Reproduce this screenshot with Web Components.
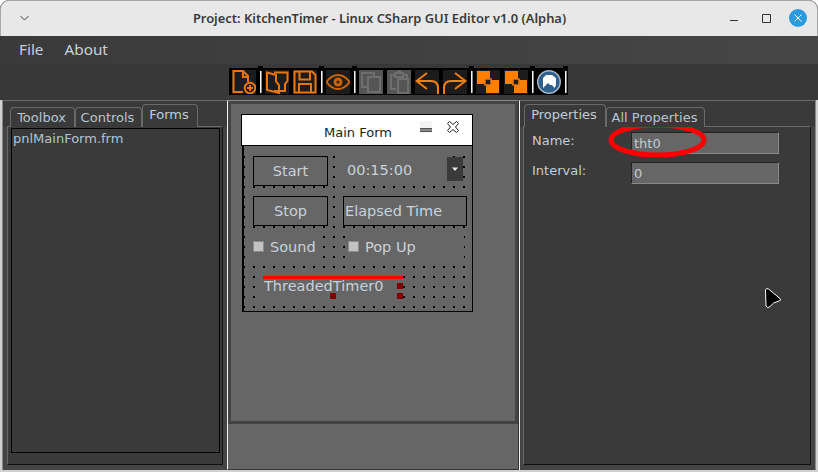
<!DOCTYPE html>
<html>
<head>
<meta charset="utf-8">
<title>KitchenTimer</title>
<style>
  html, body { margin: 0; padding: 0; background: #fff; }
  body { width: 818px; height: 472px; overflow: hidden; font-family: "DejaVu Sans", sans-serif; }
</style>
</head>
<body>

<app-window>
  <title-bar>Project: KitchenTimer - Linux CSharp GUI Editor v1.0 (Alpha)</title-bar>
  <menu-bar><span>File</span><span>About</span></menu-bar>
  <tool-bar>
    <tool-btn><svg viewBox="0 0 24 24"><path d="M11 22H1.500V1H11l5 5v6M11 1v6h5"/><circle cx="18" cy="18" r="5.300"/><path d="M18 15v6M15 18h6"/></svg></tool-btn>
    <tool-sep></tool-sep>
    <tool-btn><svg viewBox="0 0 24 24"><path d="M9 2.500H22.500V11L20 14V21H9M2 2.500L11 5V11.500L14 15V23L2 20Z"/></svg></tool-btn>
    <tool-btn><svg viewBox="0 0 24 24"><path d="M1.500 1.500H19L22.500 5V22.500H1.500ZM6.500 2V9.500H17V2M6 22V14H18V22"/></svg></tool-btn>
    <tool-sep></tool-sep>
    <tool-btn><svg viewBox="0 0 24 24"><path stroke="#c86408" d="M.5 12C4 7 8 5 12 5s8 2 11.500 7C20 17 16 19 12 19S4 17 .5 12Z"/><circle cx="12" cy="12" r="4.500" fill="#c86408" stroke="none"/><circle cx="12" cy="12" r="1.500" fill="#2a1a0a" stroke="none"/></svg></tool-btn>
    <tool-sep></tool-sep>
    <tool-btn off><svg viewBox="0 0 24 24"><path d="M9 17H3V3H15V7M9 7H21V22H9Z"/></svg></tool-btn>
    <tool-btn off><svg viewBox="0 0 24 24"><path d="M9 19H4V5H8M16 5H20V8M8 3H11V1.500H13V3H16V7H8ZM11 9H21V23H11Z"/></svg></tool-btn>
    <tool-btn><svg viewBox="0 0 24 24"><path stroke="#f08010" d="M12 3L1.500 11L12 19M2 11H16Q23 11 23 18V24"/></svg></tool-btn>
    <tool-btn><svg viewBox="0 0 24 24"><path stroke="#f08010" d="M12 3L22.500 11L12 19M22 11H8Q1 11 1 18V24"/></svg></tool-btn>
    <tool-sep></tool-sep>
    <tool-btn><svg viewBox="0 0 24 24"><path fill="#ff8000" stroke="none" d="M1 1H14V9H9V14H1ZM10 15H15V10H23V23H10Z"/><path stroke-width="1.500" d="M9 9H15V15H9Z"/></svg></tool-btn>
    <tool-btn><svg viewBox="0 0 24 24"><path fill="#ff8000" stroke="none" d="M1 1H14V9H9V14H1ZM10 15H15V10H23V23H10Z"/><path stroke-width="1.500" d="M9 9H15V15H9Z"/></svg></tool-btn>
    <tool-sep></tool-sep>
    <tool-btn logo><svg viewBox="0 0 24 24"><circle cx="12" cy="12" r="11.300" fill="#2f5f8c" stroke="#a9b8c6" stroke-width="1.400"/><path fill="#fff" stroke="none" d="M6 18V8L9 5H15L19 8V15L17.500 18L15 15H13L11 13L9 15Z"/></svg></tool-btn>
    <tool-sep></tool-sep>
  </tool-bar>
  <work-area>
    <tab-pane slot="left" tabs="Toolbox:65,Controls:67,Forms:56" active="2" list style="--pad-l:4px;--tab-indent:3px">
      <div style="padding-left:1px">pnlMainForm.frm</div>
    </tab-pane>
    <form-canvas slot="center"></form-canvas>
    <tab-pane slot="right" tabs="Properties:82,All Properties:99" active="0" style="--pad-l:3px;--tab-indent:1px">
      <prop-row label="Name:" value="tht0"></prop-row>
      <prop-row label="Interval:" value="0"></prop-row>
    </tab-pane>
  </work-area>
  <mark-overlay></mark-overlay>
</app-window>

<script>
// App shell
class AppWindow extends HTMLElement {
  constructor() {
    super();
    this.attachShadow({ mode: "open" });
    this.shadowRoot.innerHTML = `
      <style>
        :host {
          display: flex;
          flex-direction: column;
          position: relative;
          width: 818px;
          height: 472px;
          box-sizing: border-box;
          overflow: hidden;
          border-radius: 9px 9px 0 0;
          background: #3a3a3a;
          color: #c3ccd4;
          font: 13px "DejaVu Sans", sans-serif;
        }
      </style>
      <slot></slot>
    `;
  }
}

class TitleBar extends HTMLElement {
  constructor() {
    super();
    this.attachShadow({ mode: "open" });
    this.shadowRoot.innerHTML = `
      <style>
        :host {
          display: flex;
          align-items: center;
          flex: 0 0 36px;
          box-sizing: border-box;
          padding: 0 10px 1px 19px;
          background: #e8e8e8;
          border-top: 1px solid #a8a8a8;
          border-left: 1px solid #a8a8a8;
          border-right: 1px solid #a8a8a8;
          border-radius: 9px 9px 0 0;
          color: #3a3a3a;
        }
        .chev { width: 9px; height: 6px; }
        .title {
          flex: 1;
          text-align: center;
          font: 600 12.900px "Noto Sans", sans-serif;
          padding-left: 1px;
        }
        .btns { display: flex; align-items: center; gap: 16px; }
        .btns svg { display: block; }
      </style>
      <svg class="chev" viewBox="0 0 9 6" fill="none" stroke="#444" stroke-width="1"><path d="M.5 1L4.500 5L8.500 1"/></svg>
      <div class="title"><slot></slot></div>
      <div class="btns">
        <svg width="10" height="10" viewBox="0 0 10 10"><path d="M1 7.500H9" stroke="#333" stroke-width="1"/></svg>
        <svg width="12" height="12" viewBox="0 0 12 12" style="margin:0 1px 0 5px"><path d="M2.500 2.500H10.500V10.500H2.500Z" fill="none" stroke="#333"/></svg>
        <svg width="18" height="18" viewBox="0 0 18 18"><circle cx="9" cy="9" r="9" fill="#2a9ae0"/><path d="M5.500 5.500L12.500 12.500M12.500 5.500L5.500 12.500" stroke="#fff" stroke-width="1"/></svg>
      </div>
    `;
  }
}

class MenuBar extends HTMLElement {
  constructor() {
    super();
    this.attachShadow({ mode: "open" });
    this.shadowRoot.innerHTML = `
      <style>
        :host {
          display: flex;
          align-items: center;
          gap: 21px;
          flex: 0 0 28px;
          box-sizing: border-box;
          padding: 0 0 2px 19px;
          background: linear-gradient(90deg, #3a3a3a, #464646);
          color: #c5d0da;
          font: 15.300px "Noto Sans", sans-serif;
        }
      </style>
      <slot></slot>
    `;
  }
}

// Toolbar with its icon buttons
class ToolBar extends HTMLElement {
  constructor() {
    super();
    this.attachShadow({ mode: "open" });
    this.shadowRoot.innerHTML = `
      <style>
        :host {
          display: flex;
          flex: 0 0 36px;
          box-sizing: border-box;
          padding-top: 4px;
          padding-left: 229px;
          background: #383838;
        }
        .band {
          display: flex;
          align-items: flex-start;
          height: 27px;
          padding-left: 1px;
          background: #000;
        }
      </style>
      <div class="band"><slot></slot></div>
    `;
  }
}

class ToolBtn extends HTMLElement {
  constructor() {
    super();
    this.attachShadow({ mode: "open" });
    this.shadowRoot.innerHTML = `
      <style>
        :host {
          display: block;
          width: 24px;
          height: 24px;
          margin: 2px 2px 0;
          background: #1c1c1c;
        }
        :host([off]) { background: #555; }
        :host([logo]) { background: transparent; }
        ::slotted(svg) {
          display: block;
          width: 24px;
          height: 24px;
          fill: none;
          stroke: #e8760c;
          stroke-width: 2;
        }
        :host([off]) ::slotted(svg) { stroke: #6e6e6e; }
      </style>
      <slot></slot>
    `;
  }
}

class ToolSep extends HTMLElement {
  constructor() {
    super();
    this.attachShadow({ mode: "open" });
    this.shadowRoot.innerHTML = `
      <style>
        :host {
          display: flex;
          justify-content: center;
          width: 5px;
          height: 29px;
          margin-top: -2px;
          box-sizing: border-box;
          padding: 5px 0 2px;
          background: #000;
        }
        i { display: block; width: 1px; background: #f4f4f4; border-right: 1px solid #888; }
      </style>
      <i></i>
    `;
  }
}

// Three docked columns
class WorkArea extends HTMLElement {
  constructor() {
    super();
    this.attachShadow({ mode: "open" });
    this.shadowRoot.innerHTML = `
      <style>
        :host {
          display: grid;
          grid-template-columns: 225px 292px 1fr;
          flex: 1;
          min-height: 0;
          box-sizing: border-box;
          padding: 0 2px 2px 2px;
          background: #d0d0d0;
        }
        .col { display: flex; min-width: 0; min-height: 0; }
        .left { border-top: 1px solid #6a6a6a; border-left: 1px solid #888; background: #444; }
        .center { border-left: 1px solid #f2f2f2; border-top: 1px solid #888; border-right: 1px solid #333; border-bottom: 1px solid #333; }
        .right { border-left: 1px solid #f2f2f2; border-top: 1px solid #6a6a6a; border-right: 1px solid #888; background: #444; }
      </style>
      <div class="col left"><slot name="left"></slot></div>
      <div class="col center"><slot name="center"></slot></div>
      <div class="col right"><slot name="right"></slot></div>
    `;
  }
}

// Notebook with tabs on top, tabs="Name:width,..."
class TabPane extends HTMLElement {
  constructor() {
    super();
    this.attachShadow({ mode: "open" });
    const names = this.getAttribute("tabs").split(",");
    const active = Number(this.getAttribute("active"));
    const tabs = names.map((t, i) => {
      const [n, w] = t.split(":");
      return `<div class="tab ${i === active ? "on" : ""}" style="width:${w}px">${n}</div>`;
    }).join("");
    this.shadowRoot.innerHTML = `
      <style>
        :host {
          display: flex;
          flex-direction: column;
          flex: 1;
          min-width: 0;
          box-sizing: border-box;
          padding: 3px 4px 5px var(--pad-l, 4px);
          background: linear-gradient(#3a3a3a 26px, #444 0);
          color: #c3ccd4;
          font: 13px "DejaVu Sans", sans-serif;
        }
        .tabs {
          display: flex;
          align-items: flex-end;
          height: 22px;
          padding-left: var(--tab-indent, 3px);
          position: relative;
          z-index: 1;
        }
        .tab {
          box-sizing: border-box;
          height: 20px;
          padding: 2px 2px 0 0;
          border: 1px solid #6a6a6a;
          border-bottom: none;
          border-radius: 4px 4px 0 0;
          background: #3a3a3a;
          margin-bottom: -1px;
          line-height: 16px;
          text-align: center;
          color: #b8c5d0;
        }
        .tab.on {
          height: 23px;
          color: #c3ccd4;
        }
        .page {
          flex: 1;
          min-height: 0;
          display: flex;
          flex-direction: column;
          box-sizing: border-box;
          background: #3a3a3a;
          border: 1px solid #6a6a6a;
          border-right-color: #111;
          border-bottom-color: #111;
        }
        .list {
          flex: 1;
          margin: 1px 2px 11px 3px;
          border: 1px solid #000;
          padding-top: 2px;
          line-height: 16px;
          color: #b4c3d1;
        }
        .plain { padding: 5px 0 0 8px; gap: 8px; display: flex; flex-direction: column; }
      </style>
      <div class="tabs">${tabs}</div>
      <div class="page"><div class="${this.hasAttribute("list") ? "list" : "plain"}"><slot></slot></div></div>
    `;
  }
}

class PropRow extends HTMLElement {
  constructor() {
    super();
    this.attachShadow({ mode: "open" });
    this.shadowRoot.innerHTML = `
      <style>
        :host {
          display: grid;
          grid-template-columns: 99px 148px;
          height: 22px;
          color: #c3ccd4;
          font: 13px "DejaVu Sans", sans-serif;
        }
        .lab { padding-top: 1px; line-height: 16px; }
        .val {
          box-sizing: border-box;
          height: 22px;
          padding: 3px 0 0 2px;
          line-height: 16px;
          background: #666;
          border: 1px solid;
          border-color: #222 #888 #888 #222;
        }
      </style>
      <div class="lab">${this.getAttribute("label")}</div>
      <div class="val">${this.getAttribute("value")}</div>
    `;
  }
}

// The form being edited, widgets sit at their designer coordinates
class FormCanvas extends HTMLElement {
  constructor() {
    super();
    this.attachShadow({ mode: "open" });
    this.shadowRoot.innerHTML = `
      <style>
        :host {
          display: flex;
          flex-direction: column;
          flex: 1;
          background: #666;
          color: #c8d2da;
          font: 14.500px "DejaVu Sans", sans-serif;
        }
        .sheet {
          box-sizing: border-box;
          width: 290px;
          height: 323px;
          padding: 10px 0 0 10px;
          background: #666;
          border: 3px solid #444;
        }
        .form { width: 232px; box-sizing: border-box; }
        .head {
          position: relative;
          box-sizing: border-box;
          height: 32px;
          background: #fff;
          border: 1px solid #000;
          color: #1c1c1c;
          font-size: 13px;
          text-align: center;
          line-height: 36px;
          padding-left: 2px;
        }
        .min { position: absolute; left: 178px; top: 6px; width: 12px; height: 12px; background: #f4f4f4; }
        .min::after { content: ""; position: absolute; left: 0; right: 0; top: 7px; height: 4px; box-sizing: border-box; background: #8a8a8a; border: 1px solid #555; border-width: 1px 0; }
        .close { position: absolute; left: 205px; top: 6px; width: 12px; height: 12px; }
        .client {
          position: relative;
          box-sizing: border-box;
          height: 166px;
          margin-left: 1px;
          border: solid #000;
          border-width: 0 1px 1px 2px;
          background: conic-gradient(at 2px 2px, transparent 75%, #000 0) 9px 0 / 10px 10px #666;
        }
        .w { position: absolute; box-sizing: border-box; background: #666; white-space: nowrap; }
        .btn { border: 1px solid #000; text-align: center; line-height: 28px; }
        .chk { position: absolute; left: 0; top: 7px; box-sizing: border-box; width: 11px; height: 11px; background: #c2c2c2; border: 1px solid #8a8a8a; }
        .mark { position: absolute; width: 6px; height: 6px; background: #800000; }
      </style>
      <div class="sheet">
        <div class="form">
          <div class="head">Main Form
            <div class="min"></div>
            <svg class="close" viewBox="0 0 12 12" fill="#fff" stroke="#222" stroke-width="1"><path d="M2.500 .5L6 3.500L9.500 .5L11.500 2.500L8.500 6L11.500 9.500L9.500 11.500L6 8.500L2.500 11.500L.5 9.500L3.500 6L.5 2.500Z"/></svg>
          </div>
          <div class="client">
            <div class="w" style="left:0;top:0;width:100%;height:8px"></div>
            <div class="w btn" style="left:9px;top:10px;width:75px;height:30px">Start</div>
            <div class="w" style="left:97px;top:10px;width:106px;height:26px;padding:2px 0 0 6px;line-height:24px">00:15:00</div>
            <div class="w" style="left:203px;top:11px;width:16px;height:24px;background:#3a3a3a"><svg width="16" height="24" viewBox="0 0 16 24" style="display:block"><path d="M5 10.500H11L8 14Z" fill="#eee"/></svg></div>
            <div class="w btn" style="left:9px;top:50px;width:75px;height:30px">Stop</div>
            <div class="w btn" style="left:99px;top:50px;width:124px;height:30px;text-align:left;padding-left:1px">Elapsed Time</div>
            <div class="w" style="left:9px;top:88px;width:66px;height:26px;line-height:26px;padding-left:17px"><div class="chk"></div>Sound</div>
            <div class="w" style="left:104px;top:88px;width:116px;height:26px;line-height:26px;padding-left:17px"><div class="chk"></div>Pop Up</div>
            <div class="w" style="left:19px;top:126px;width:140px;height:32px;padding:2px 0 0 1px;line-height:24px">ThreadedTimer0</div>
            <div class="mark" style="left:153px;top:137px"></div>
            <div class="mark" style="left:153px;top:147px"></div>
            <div class="mark" style="left:86px;top:147px"></div>
          </div>
        </div>
      </div>
    `;
  }
}

// Red annotations and the mouse pointer lie over everything
class MarkOverlay extends HTMLElement {
  constructor() {
    super();
    this.attachShadow({ mode: "open" });
    this.shadowRoot.innerHTML = `
      <style>
        :host { position: absolute; left: 0; top: 0; width: 818px; height: 472px; pointer-events: none; }
        svg { display: block; }
      </style>
      <svg width="818" height="472" viewBox="0 0 818 472">
        <ellipse cx="657.500" cy="140" rx="46.500" ry="15" fill="none" stroke="#ff0000" stroke-width="5"/>
        <path d="M263 277.500H403" stroke="#ff0000" stroke-width="3"/>
        <path d="M765.500 290Q766 287.500 768.500 289L780 298.500Q781.500 300.500 779 301Q773 302 770 306.500Q767.500 309 766 306Z" fill="#000" stroke="#fff" stroke-width="1"/>
      </svg>
    `;
  }
}

customElements.define("app-window", AppWindow);
customElements.define("title-bar", TitleBar);
customElements.define("menu-bar", MenuBar);
customElements.define("tool-bar", ToolBar);
customElements.define("tool-btn", ToolBtn);
customElements.define("tool-sep", ToolSep);
customElements.define("work-area", WorkArea);
customElements.define("tab-pane", TabPane);
customElements.define("prop-row", PropRow);
customElements.define("form-canvas", FormCanvas);
customElements.define("mark-overlay", MarkOverlay);
</script>
</body>
</html>
